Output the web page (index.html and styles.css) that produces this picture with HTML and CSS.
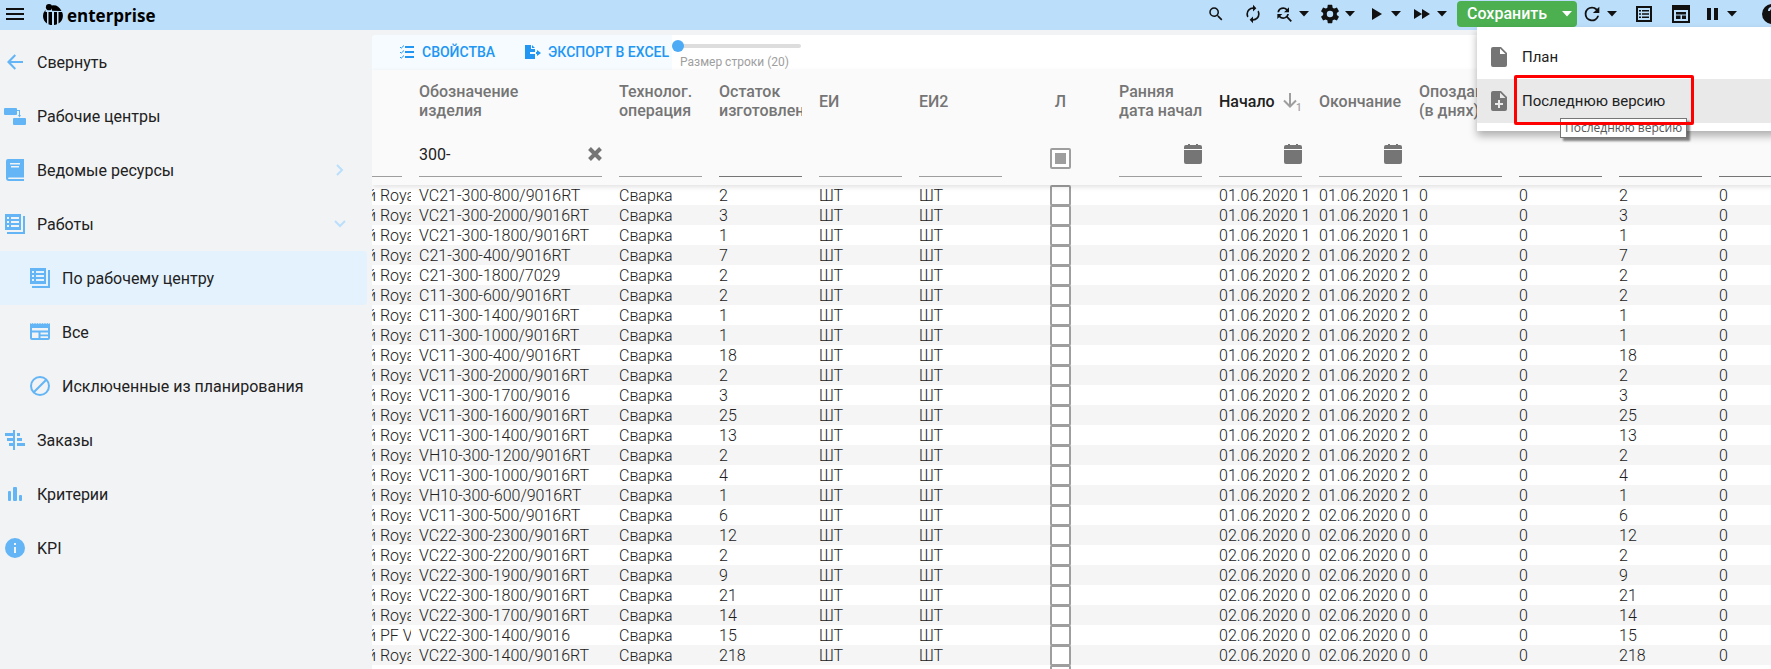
FILE: index.html
```html
<!DOCTYPE html>
<html lang="ru">
<head>
<meta charset="utf-8">
<title>IT-Enterprise</title>
<link rel="stylesheet" href="styles.css">
</head>
<body>
<svg class="sprite" aria-hidden="true">
  <symbol id="i-caret" viewBox="0 0 10 6"><path d="M0 0h10L5 5.500z"/></symbol>
  <symbol id="i-list" viewBox="0 0 22 22"><path fill-rule="evenodd" d="M1 1h16v16H1zM3 4v2h2V4zm4 0v2h8V4zM3 8v2h2V8zm4 0v2h8V8zm-4 4v2h2v-2zm4 0v2h8v-2zM19 3h2v18H3v-2h16z"/></symbol>
  <symbol id="i-calendar" viewBox="0 0 18 20"><path d="M0 5V3q0-2 2-2h2V0h2v1h6V0h2v1h2q2 0 2 2v2zM0 6h18V18q0 2-2 2H2q-2 0-2-2z"/></symbol>
</svg>

<header class="topbar">
  <button class="icon-btn menu-btn" aria-label="Меню"><svg viewBox="0 0 24 24" width="24" height="24"><path d="M3 6h18v2H3zm0 5h18v2H3zm0 5h18v2H3z"/></svg></button>
  <a class="logo" href="#">
    <svg viewBox="0 0 20 21" width="20" height="21" aria-hidden="true"><circle cx="6" cy="3.200" r="3.100"/><path d="M2.500 6Q0 8.500 0 12q0 4.500 4 7.500V8H2.500zM5.500 8h3.500v13H7.500l-2-.8zM9 6.800q0-3-.5-5.300Q15 0 18.500 7zM11 8h3v12.200q-1.500.8-3 .8zM15.500 8H19q1.200 2 .8 5-.5 4-4.300 6.500z"/></svg>
    <span>enterprise</span>
  </a>
  <div class="tools">
    <button class="icon-btn wide" aria-label="Поиск"><svg viewBox="0 0 24 24" width="18" height="18"><path d="M9.500 3A6.500 6.500 0 0 1 16 9.500c0 1.610-.59 3.090-1.560 4.230l.27.270h.79l5 5-1.500 1.500-5-5v-.79l-.27-.27A6.516 6.516 0 0 1 9.500 16a6.500 6.500 0 0 1 0-13m0 2C7 5 5 7 5 9.500S7 14 9.500 14 14 12 14 9.500 12 5 9.500 5z"/></svg></button>
    <button class="icon-btn wide" aria-label="Синхронизация"><svg viewBox="0 0 24 24" width="20" height="20"><path d="M12 6v3l4-4-4-4v3a8 8 0 0 0-8 8c0 1.570.460 3.030 1.240 4.260L6.700 14.800A5.900 5.900 0 0 1 6 12a6 6 0 0 1 6-6m6.760 1.740L17.300 9.200c.440.840.700 1.800.700 2.800a6 6 0 0 1-6 6v-3l-4 4 4 4v-3a8 8 0 0 0 8-8c0-1.570-.46-3.030-1.240-4.260z"/></svg></button>
    <div class="split">
      <button class="icon-btn" aria-label="Найти и заменить"><svg viewBox="0 0 24 24" width="20" height="20"><path d="M11 6c1.380 0 2.630.560 3.540 1.460L12 10h6V4l-2.050 2.050A6.980 6.980 0 0 0 4.080 10H6.100A5.010 5.010 0 0 1 11 6m5.640 9.140A6.890 6.890 0 0 0 17.920 12H15.900a5 5 0 0 1-8.440 2.540L10 12H4v6l2.050-2.050A6.980 6.980 0 0 0 11 18a6.970 6.970 0 0 0 4.140-1.360L20 21.490 21.490 20z"/></svg></button>
      <button class="caret-btn" aria-label="Ещё"><svg width="10" height="6"><use href="#i-caret"/></svg></button>
    </div>
    <div class="split">
      <button class="icon-btn" aria-label="Настройки"><svg viewBox="0 0 24 24" width="22" height="22"><path d="M12 15.500A3.500 3.500 0 1 1 12 8.500a3.500 3.500 0 0 1 0 7m7.430-2.530c.04-.32.070-.64.070-.97s-.03-.66-.07-1l2.110-1.630c.190-.15.240-.42.120-.64l-2-3.460c-.12-.22-.39-.31-.61-.22l-2.490 1c-.52-.39-1.060-.73-1.690-.98l-.37-2.650A.506.506 0 0 0 14 2h-4c-.25 0-.46.180-.5.420l-.37 2.650c-.63.250-1.170.590-1.690.980l-2.490-1c-.22-.09-.49 0-.61.220l-2 3.460c-.13.220-.07.490.120.640L4.570 11c-.04.340-.07.670-.07 1s.030.650.070.970l-2.110 1.660c-.19.150-.25.420-.12.640l2 3.460c.120.220.390.300.610.220l2.490-1.010c.520.400 1.060.740 1.690.990l.370 2.650c.040.240.250.420.500.420h4c.250 0 .460-.18.500-.42l.370-2.650c.630-.26 1.170-.59 1.690-.99l2.490 1.010c.220.080.490 0 .610-.22l2-3.460c.120-.22.070-.49-.12-.64z"/></svg></button>
      <button class="caret-btn" aria-label="Ещё"><svg width="10" height="6"><use href="#i-caret"/></svg></button>
    </div>
    <div class="split">
      <button class="icon-btn" aria-label="Запуск"><svg viewBox="0 0 20 20" width="20" height="20"><path d="M6 4v12l10-6z"/></svg></button>
      <button class="caret-btn" aria-label="Ещё"><svg width="10" height="6"><use href="#i-caret"/></svg></button>
    </div>
    <div class="split">
      <button class="icon-btn" aria-label="Ускорить"><svg viewBox="0 0 20 20" width="20" height="20"><path d="M2 5v10l8-5zm8 0v10l8-5z"/></svg></button>
      <button class="caret-btn" aria-label="Ещё"><svg width="10" height="6"><use href="#i-caret"/></svg></button>
    </div>
    <div class="save">
      <button class="save-btn" aria-haspopup="menu" aria-expanded="true">Сохранить<svg width="10" height="6"><use href="#i-caret"/></svg></button>
      <div class="menu" role="menu">
        <button class="menu-item" role="menuitem"><svg viewBox="0 0 16 20" width="16" height="20"><path fill-rule="evenodd" d="M2 0h8l6 6v12q0 2-2 2H2q-2 0-2-2V2q0-2 2-2zm7 1.500V7h5.500z"/></svg><span>План</span></button>
        <button class="menu-item current" role="menuitem"><svg viewBox="0 0 16 20" width="16" height="20"><path fill-rule="evenodd" d="M2 0h8l6 6v12q0 2-2 2H2q-2 0-2-2V2q0-2 2-2zm7 1.500V7h5.500zM7 9v3H4v2h3v3h2v-3h3v-2H9V9z"/></svg><span>Последнюю версию</span></button>
        <div class="tooltip" role="tooltip">Последнюю версию</div>
        <div class="highlight"></div>
      </div>
    </div>
    <div class="split">
      <button class="icon-btn" aria-label="Обновить"><svg viewBox="0 0 24 24" width="22" height="22"><path d="M17.650 6.350A7.958 7.958 0 0 0 12 4a8 8 0 1 0 7.730 10h-2.080A6 6 0 1 1 12 6c1.660 0 3.140.690 4.220 1.780L13 11h7V4z"/></svg></button>
      <button class="caret-btn" aria-label="Ещё"><svg width="10" height="6"><use href="#i-caret"/></svg></button>
    </div>
    <button class="icon-btn wide" aria-label="Список"><svg viewBox="0 0 18 18" width="18" height="18"><path fill-rule="evenodd" d="M1 1h16v16H1zm2 2v12h12V3zm1 2h2v1.500H4zm3 0h7v1.500H7zM4 8.300h2v1.500H4zm3 0h7v1.500H7zm-3 3.300h2v1.500H4zm3 0h7v1.500H7z"/></svg></button>
    <button class="icon-btn wide" aria-label="Форма"><svg viewBox="0 0 18 18" width="18" height="18"><path fill-rule="evenodd" d="M0 0h18v18H0zm2 5v11h14V5zm2 2h10v2.500H4zm0 3.500h4.500V14H4zm6 0h4V14h-4z"/></svg></button>
    <div class="split">
      <button class="icon-btn" aria-label="Пауза"><svg viewBox="0 0 20 20" width="20" height="20"><path d="M5 4h4v12H5zm7 0h4v12h-4z"/></svg></button>
      <button class="caret-btn" aria-label="Ещё"><svg width="10" height="6"><use href="#i-caret"/></svg></button>
    </div>
    <button class="icon-btn help" aria-label="Справка"><svg viewBox="0 0 24 24" width="24" height="24"><path d="M15.070 11.250l-.9.920C13.450 12.890 13 13.500 13 15h-2v-.5c0-1.110.450-2.110 1.170-2.830l1.240-1.260c.370-.36.590-.86.590-1.410a2 2 0 0 0-4 0H8a4 4 0 0 1 8 0 3.200 3.200 0 0 1-.93 2.250M13 19h-2v-2h2M12 2a10 10 0 1 0 0 20 10 10 0 0 0 0-20z"/></svg></button>
  </div>
</header>

<div class="layout">
  <nav class="sidebar">
    <a class="nav-item" href="#"><svg viewBox="0 0 22 22" width="22" height="22"><path d="M19 10v2H7l5 5.300-1.400 1.400L3 11l7.600-7.700L12 4.700 7 10z"/></svg><span>Свернуть</span></a>
    <a class="nav-item" href="#"><svg viewBox="0 0 22 22" width="22" height="22"><rect y="3" width="13" height="7" rx="1"/><rect x="9" y="13" width="13" height="7" rx="1"/><path d="M13 5h3v5h1l-1.500 2.500L14 10h1V6h-2z"/></svg><span>Рабочие центры</span></a>
    <a class="nav-item" href="#"><svg viewBox="0 0 22 22" width="22" height="22"><path fill-rule="evenodd" d="M4 0h16v18.500H5q-1 0-1 .7t1 .8h15v2H5q-3 0-3-3V2q0-2 2-2zm2 4v1.500h10V4zm1 3v1.500h8V7z"/></svg><span>Ведомые ресурсы</span><svg class="chev" viewBox="0 0 12 12" width="12" height="12"><path d="M3 1l5 5-5 5"/></svg></a>
    <a class="nav-item" href="#"><svg width="22" height="22"><use href="#i-list"/></svg><span>Работы</span><svg class="chev" viewBox="0 0 12 12" width="12" height="12"><path d="M1 3l5 5 5-5"/></svg></a>
    <a class="nav-item sub active" href="#"><svg width="22" height="22"><use href="#i-list"/></svg><span>По рабочему центру</span></a>
    <a class="nav-item sub" href="#"><svg viewBox="0 0 22 22" width="22" height="22"><path fill-rule="evenodd" d="M1 4V2l1.250 1L3.500 2l1.250 1L6 2l1.250 1L8.500 2l1.250 1L11 2l1.250 1 1.250-1 1.250 1L16 2l1.250 1 1.250-1 1.250 1L21 2v15q0 2-2 2H3q-2 0-2-2zm2 3v2.500h16V7zm0 4.500V17h6.500v-5.500zm8.500 0v2H19v-2zm0 3.700V17H19v-1.800z"/></svg><span>Все</span></a>
    <a class="nav-item sub" href="#"><svg viewBox="0 0 22 22" width="22" height="22"><path class="line" d="M18 4L4 18M20 11a9 9 0 1 1-18 0 9 9 0 0 1 18 0z"/></svg><span>Исключенные из планирования</span></a>
    <a class="nav-item" href="#"><svg viewBox="0 0 22 22" width="22" height="22"><path d="M1 4h8V1h2v20H9v-4H5v-3h4v-2H3V9h6V7H1zm12 0h3v3h-3zm0 5h5v3h-5zm0 5h8v3h-8z"/></svg><span>Заказы</span></a>
    <a class="nav-item" href="#"><svg viewBox="0 0 22 22" width="22" height="22"><rect x="4" y="8" width="3" height="10" rx="1"/><rect x="9" y="4" width="4" height="14" rx="1"/><rect x="15" y="12" width="3" height="6" rx="1"/></svg><span>Критерии</span></a>
    <a class="nav-item" href="#"><svg viewBox="0 0 22 22" width="22" height="22"><path fill-rule="evenodd" d="M11 1a10 10 0 1 0 0 20 10 10 0 0 0 0-20zM10 6h2v2h-2zm0 4h2v6h-2z"/></svg><span>KPI</span></a>
  </nav>

  <main class="content">
    <div class="toolbar">
      <div class="actions">
        <button class="action"><svg viewBox="0 0 16 16" width="16" height="16"><path d="M6 2h9v2H6zm0 5h9v2H6zm0 5h9v2H6z"/><path class="line" d="M1 3l1.200 1.200L5 1.500M1 8l1.200 1.200L5 6.500M1 13l1.200 1.200L5 11.500"/></svg>СВОЙСТВА</button>
        <button class="action"><svg viewBox="0 0 16 16" width="16" height="16"><path fill-rule="evenodd" d="M0 1h6v4h4v3H5v2h5v5H0zM7 1l3 3H7zM11 8h1V6l4 3-4 3v-2h-1z"/></svg>ЭКСПОРТ В EXCEL</button>
      </div>
      <div class="row-size">
        <input type="range" id="row-size" min="20" max="80" value="20">
        <label for="row-size">Размер строки (20)</label>
      </div>
    </div>
    <table class="grid">
      <colgroup><col class="c-name"><col class="c-wide"><col span="12" class="c-std"></colgroup>
      <thead>
        <tr class="labels">
          <th></th>
          <th><div>Обозначение изделия</div></th>
          <th><div>Технолог. операция</div></th>
          <th><div>Остаток изготовления</div></th>
          <th><div>ЕИ</div></th>
          <th><div>ЕИ2</div></th>
          <th class="center"><div>Л</div></th>
          <th><div>Ранняя<br>дата&nbsp;начала</div></th>
          <th class="sorted"><div>Начало<svg viewBox="0 0 20 20" width="20" height="20"><path d="M8 2v13M2 9.500l6 6 6-6"/><text x="14" y="20">1</text></svg></div></th>
          <th><div>Окончание</div></th>
          <th><div>Опоздание<br>(в&nbsp;днях)</div></th>
          <th></th>
          <th></th>
          <th></th>
        </tr>
        <tr class="filters">
          <td><input type="text" aria-label="Наименование"></td>
          <td><div class="field"><input type="text" aria-label="Обозначение изделия" value="300-"><button aria-label="Очистить"><svg viewBox="0 0 14 14" width="14" height="14"><path d="M1.500 1.500l11 11m0-11l-11 11"/></svg></button></div></td>
          <td><input type="text" aria-label="Технолог. операция"></td>
          <td><input class="dark" type="text" aria-label="Остаток"></td>
          <td><input type="text" aria-label="ЕИ"></td>
          <td><input type="text" aria-label="ЕИ2"></td>
          <td class="center"><input type="checkbox" class="check mixed" aria-label="Л"></td>
          <td><div class="field"><input type="text" aria-label="Ранняя дата начала"><button aria-label="Календарь"><svg width="18" height="20"><use href="#i-calendar"/></svg></button></div></td>
          <td><div class="field"><input type="text" aria-label="Начало"><button aria-label="Календарь"><svg width="18" height="20"><use href="#i-calendar"/></svg></button></div></td>
          <td><div class="field"><input type="text" aria-label="Окончание"><button aria-label="Календарь"><svg width="18" height="20"><use href="#i-calendar"/></svg></button></div></td>
          <td><input class="dark" type="text" aria-label="Опоздание"></td>
          <td><input class="dark" type="text" aria-label="Количество 1"></td>
          <td><input class="dark" type="text" aria-label="Количество 2"></td>
          <td><input class="dark" type="text" aria-label="Количество 3"></td>
        </tr>
      </thead>
      <tbody id="rows"></tbody>
    </table>
  </main>
</div>
<script src="app.js"></script>
</body>
</html>
```
FILE: app.js
```js
// [item code, quantity, start, end]
const A = "01.06.2020 1", B = "01.06.2020 2", C = "02.06.2020 0";
const data = [
  ["VC21-300-800/9016RT", 2, A, A],
  ["VC21-300-2000/9016RT", 3, A, A],
  ["VC21-300-1800/9016RT", 1, A, A],
  ["C21-300-400/9016RT", 7, B, B],
  ["C21-300-1800/7029", 2, B, B],
  ["C11-300-600/9016RT", 2, B, B],
  ["C11-300-1400/9016RT", 1, B, B],
  ["C11-300-1000/9016RT", 1, B, B],
  ["VC11-300-400/9016RT", 18, B, B],
  ["VC11-300-2000/9016RT", 2, B, B],
  ["VC11-300-1700/9016", 3, B, B],
  ["VC11-300-1600/9016RT", 25, B, B],
  ["VC11-300-1400/9016RT", 13, B, B],
  ["VH10-300-1200/9016RT", 2, B, B],
  ["VC11-300-1000/9016RT", 4, B, B],
  ["VH10-300-600/9016RT", 1, B, B],
  ["VC11-300-500/9016RT", 6, B, C],
  ["VC22-300-2300/9016RT", 12, C, C],
  ["VC22-300-2200/9016RT", 2, C, C],
  ["VC22-300-1900/9016RT", 9, C, C],
  ["VC22-300-1800/9016RT", 21, C, C],
  ["VC22-300-1700/9016RT", 14, C, C],
  ["VC22-300-1400/9016", 15, C, C, "й PF V"],
  ["VC22-300-1400/9016RT", 218, C, C]
];

const cell = (text) => `<td>${text}</td>`;
const check = `<td class="center"><div class="check-cell"><input type="checkbox" class="check" aria-label="Л"></div></td>`;

document.getElementById("rows").innerHTML = data.map(([code, qty, start, end, name = "й Royal"]) =>
  `<tr><td class="name">${name}</td>` +
  [code, "Сварка", qty, "ШТ", "ШТ"].map(cell).join("") + check +
  ["", start, end, 0, 0, qty, 0].map(cell).join("") + "</tr>"
).join("") + `<tr>${"<td></td>".repeat(6)}${check}${"<td></td>".repeat(7)}</tr>`;
```
FILE: styles.css
```css
* { box-sizing: border-box; }
body {
  margin: 0;
  min-height: 100vh;
  display: flex;
  flex-direction: column;
  overflow: hidden;
  background: #f1f3f5;
  color: #212121;
  font: 16px/20px Roboto, "Noto Sans", sans-serif;
}
button, input { font: inherit; color: inherit; }
button { margin: 0; padding: 0; border: 0; background: none; cursor: pointer; }
svg { display: block; flex: none; fill: currentColor; }
.line { fill: none; stroke: currentColor; stroke-width: 2; }
.action .line { stroke-width: 1; }
.sprite { position: absolute; width: 0; height: 0; }

/* top bar */
.topbar {
  position: relative;
  z-index: 5;
  display: flex;
  align-items: center;
  height: 30px;
  padding: 0 0 2px 3px;
  background: #bbdefb;
  color: #111;
}
.icon-btn, .caret-btn { display: flex; align-items: center; justify-content: center; height: 28px; }
.icon-btn { width: 26px; }
.icon-btn.wide { width: 37px; }
.icon-btn.menu-btn { width: 24px; }
.caret-btn { width: 14px; }
.split { display: flex; width: 46px; }
.logo {
  display: flex;
  align-items: center;
  gap: 4px;
  margin-left: 16px;
  color: #000;
  font: 700 17px/22px "Open Sans", sans-serif;
  text-decoration: none;
}
.logo span { padding-top: 3px; }
.tools { display: flex; align-items: center; margin-left: auto; margin-right: -14px; height: 28px; }
.help { margin-left: 14px; }
.save { position: relative; margin: 0 2px; }
.save-btn {
  display: flex;
  align-items: center;
  justify-content: space-between;
  width: 120px;
  height: 26px;
  padding: 0 5px 0 10px;
  border-radius: 4px;
  background: #4caf50;
  color: #fff;
  font-weight: 500;
}
.menu {
  position: absolute;
  top: 26px;
  left: 20px;
  width: 320px;
  padding: 8px 0;
  background: #fff;
  box-shadow: 0 5px 8px rgba(0, 0, 0, .3);
}
.menu-item {
  display: flex;
  align-items: center;
  gap: 15px;
  width: 100%;
  height: 44px;
  padding-left: 14px;
  color: #212121;
}
.menu-item svg { color: #757575; }
.menu-item span { font-size: 15px; }
.menu-item.current { background: #e9e9e9; }
.highlight {
  position: absolute;
  top: 48px;
  left: 37px;
  width: 180px;
  height: 50px;
  border: 3px solid #f00;
  border-radius: 2px;
}
.tooltip {
  position: absolute;
  top: 91px;
  left: 83px;
  padding: 0 4px;
  border: 1px solid #767676;
  background: #fff;
  box-shadow: 3px 3px 2px rgba(0, 0, 0, .45);
  color: #575757;
  font: 12px/18px "Open Sans", sans-serif;
  white-space: nowrap;
}

/* layout */
.layout { flex: 1; display: flex; gap: 5px; padding-top: 5px; }
.sidebar { flex: none; width: 367px; }
.nav-item {
  display: flex;
  align-items: center;
  gap: 11px;
  height: 54px;
  padding: 0 21px 0 4px;
  border-radius: 0 4px 4px 0;
  color: #212121;
  text-decoration: none;
}
.nav-item span { padding-top: 2px; }
.nav-item svg { color: #64b5f6; }
.nav-item.sub { padding-left: 29px; }
.nav-item.active { background: #e3f2fd; }
.nav-item .chev { margin-left: auto; fill: none; stroke: #bbdefb; stroke-width: 2; }
.content { flex: 1; min-width: 0; overflow: hidden; background: #fff; border-radius: 4px 0 0 0; }

/* toolbar */
.toolbar { display: flex; height: 35px; }
.actions { display: flex; align-items: center; gap: 30px; width: 300px; padding: 0 0 2px 27px; background: #f5fbff; }
.action {
  display: flex;
  align-items: center;
  gap: 7px;
  color: #2196f3;
  font-size: 14px;
  font-weight: 500;
  white-space: nowrap;
}
.row-size { display: flex; flex-direction: column; gap: 3px; width: 129px; padding-top: 5px; }
.row-size label { padding-left: 8px; color: #9e9e9e; font-size: 12px; line-height: 14px; }
.row-size input { appearance: none; width: 100%; height: 12px; margin: 0; background: none; }
.row-size input::-webkit-slider-runnable-track { height: 4px; border-radius: 2px; background: #ddd; }
.row-size input::-webkit-slider-thumb {
  appearance: none;
  width: 12px;
  height: 12px;
  margin-top: -4px;
  border-radius: 50%;
  background: #4dabf5;
}

/* grid */
.grid { width: 1439px; table-layout: fixed; border-collapse: collapse; }
.c-name { width: 39px; }
.c-wide { width: 200px; }
.c-std { width: 100px; }
.grid thead { position: relative; z-index: 1; background: #fafafa; box-shadow: 0 2px 5px rgba(0, 0, 0, .12); }
.grid th { height: 62px; padding: 0 9px 0 8px; color: #757575; font-weight: 500; line-height: 19px; text-align: left; }
.grid th div { max-width: 110px; overflow: hidden; }
.grid th.sorted { color: #212121; }
.grid .sorted div { display: flex; align-items: center; justify-content: space-between; overflow: visible; }
.sorted path { fill: none; stroke: #9e9e9e; stroke-width: 2; }
.sorted text { fill: #9e9e9e; font-size: 10px; }
.filters td { height: 53px; padding: 0 9px 8px 8px; }
.filters td:first-child { padding-left: 0; }
.filters input[type="text"] {
  display: block;
  width: 100%;
  height: 45px;
  padding: 0;
  border: 0;
  border-bottom: 1px solid #9e9e9e;
  background: none;
}
.filters input.dark { border-bottom-color: #757575; }
.field { position: relative; color: #212121; }
.field button { position: absolute; right: 0; top: 0; height: 43px; color: #757575; }
.field path { stroke: currentColor; stroke-width: 4; }
.grid td { overflow: hidden; white-space: nowrap; }
.grid .center { padding: 0 1px 0 0; text-align: center; }
.grid th.center div { max-width: none; }
.check {
  appearance: none;
  display: block;
  flex: none;
  width: 21px;
  height: 21px;
  margin: 0 auto;
  border: 2px solid #9e9e9e;
  border-radius: 2px;
  background: #fff;
}
.check.mixed { padding: 3px; background: #9e9e9e content-box; box-shadow: inset 0 0 0 3px #fff; }
tbody td { height: 20px; padding: 1px 0 0 8px; font-weight: 300; line-height: 19px; }
tbody .name { padding: 1px 0 0; text-indent: -5px; }
tbody tr:nth-child(even) { background: #f5f5f5; }
.check-cell { display: flex; align-items: center; height: 20px; }
tbody td.center { overflow: visible; }
```
